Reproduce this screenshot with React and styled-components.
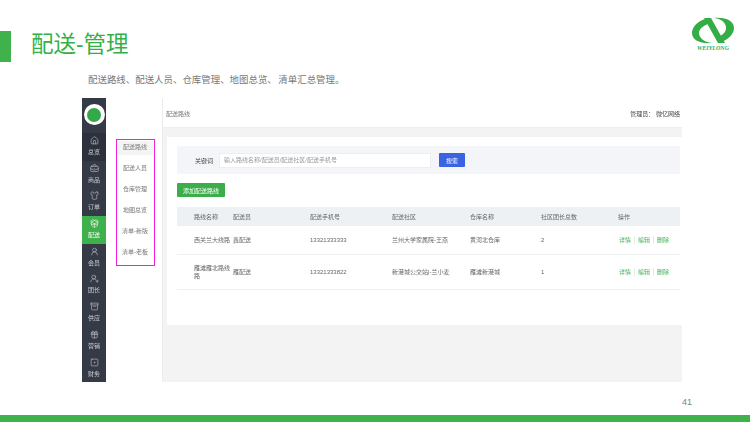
import React from 'react';
import styled, { createGlobalStyle } from 'styled-components';
import { House, BriefcaseBusiness, Shirt, PackageOpen, UserRound, UserRoundPlus, Archive, Gift, SquareDot } from 'lucide-react';

const GlobalStyle = createGlobalStyle`
  html, body {
    margin: 0;
    padding: 0;
    background: #fff;
  }
  body {
    font-family: "Liberation Sans", "Noto Sans CJK SC", sans-serif;
  }
`;

const Slide = styled.div`
  width: 750px;
  height: 422px;
  display: flex;
  flex-direction: column;
  overflow: hidden;
  background: #fff;
`;

const SlideHeader = styled.header`
  height: 62px;
  display: flex;
  justify-content: space-between;
  align-items: flex-start;
  padding-right: 14px;
`;

const TitleWrap = styled.div`
  display: flex;
  align-items: center;
  gap: 20px;
  margin-top: 31px;
`;

const TitleBar = styled.div`
  width: 11px;
  height: 31px;
  background: #3fb24b;
`;

const Title = styled.h1`
  margin: 0 0 4px;
  font-size: 22.5px;
  line-height: 26px;
  font-weight: 400;
  color: #34b049;
`;

const Logo = styled.svg`
  width: 46px;
  height: 35px;
  margin-top: 17px;
`;

const Description = styled.p`
  margin: 11px 0 0 88px;
  height: 25px;
  font-size: 9.45px;
  line-height: 14px;
  color: #777;
  white-space: pre;
  word-spacing: -1px;
`;

const Mock = styled.section`
  margin-left: 82px;
  width: 600px;
  height: 284px;
  display: flex;
  filter: blur(0.25px);
`;

const Sidebar = styled.nav`
  width: 24px;
  background: #343a46;
  display: flex;
  flex-direction: column;
  align-items: center;
`;

const SideLogo = styled.div`
  width: 21px;
  height: 21px;
  margin: 6px 0 8px;
  border-radius: 50%;
  background: #fff;
  display: flex;
  align-items: center;
  justify-content: center;
  flex-shrink: 0;

  &::after {
    content: '';
    width: 14px;
    height: 14px;
    border-radius: 50%;
    background: #33a94a;
  }
`;

const SideItem = styled.div`
  width: 24px;
  height: 27.7px;
  flex-shrink: 0;
  box-sizing: border-box;
  padding-top: 3px;
  display: flex;
  flex-direction: column;
  align-items: center;
  gap: 3px;
  color: ${p => (p.$active ? '#fff' : '#c9ccd1')};
  background: ${p => (p.$active ? '#3eb04c' : p.$home ? '#2c313c' : 'transparent')};
  font-size: 6px;
  line-height: 8px;
`;

const SubNav = styled.div`
  width: 56px;
  padding: 41px 0 0 10px;
  box-sizing: border-box;
  background: #fff;
`;

const SubBox = styled.div`
  width: 39px;
  height: 127px;
  box-sizing: border-box;
  border: 1.5px solid #f01fdc;
  padding: 0.5px;
  display: flex;
  flex-direction: column;
  gap: 7.1px;
`;

const SubItem = styled.div`
  height: 14px;
  margin-right: 1px;
  font-size: 6px;
  line-height: 12px;
  text-align: center;
  color: #777;
  background: ${p => (p.$active ? '#f4f4f4' : 'transparent')};
`;

const Main = styled.div`
  flex: 1;
  display: flex;
  flex-direction: column;
  background: #f3f3f3;
  border-left: 1px solid #ececec;
`;

const TopBar = styled.div`
  height: 30px;
  flex-shrink: 0;
  box-sizing: border-box;
  padding: 2px 2px 0 3px;
  display: flex;
  align-items: center;
  justify-content: space-between;
  background: #fff;
  border-bottom: 1px solid #eeeeee;
  font-size: 6px;
  color: #777;
`;

const Admin = styled.span`
  color: #444;
`;

const Card = styled.div`
  margin: 9px 0 57px 4px;
  flex: 1;
  padding: 9px 2px 0 10px;
  background: #fff;
`;

const SearchBand = styled.div`
  height: 28px;
  display: flex;
  align-items: center;
  background: #f3f5f8;
  padding-left: 18px;
`;

const SearchLabel = styled.label`
  width: 24px;
  font-size: 6px;
  color: #444;
`;

const SearchInput = styled.div`
  width: 212px;
  height: 15px;
  box-sizing: border-box;
  padding-left: 4px;
  background: #fff;
  border: 1px solid #eceef1;
  font-size: 6px;
  line-height: 13px;
  color: #999;
`;

const Button = styled.button`
  border: 0;
  padding: 0;
  font-family: inherit;
  font-size: 6px;
  font-weight: 400;
  color: #fff;
  border-radius: 1px;
`;

const SearchButton = styled(Button)`
  width: 26px;
  height: 14px;
  margin-left: 8px;
  background: #3a63e2;
`;

const AddButton = styled(Button)`
  display: block;
  width: 48px;
  height: 14px;
  margin: 9px 0 10px;
  background: #3bae4b;
`;

const Table = styled.table`
  width: 503px;
  table-layout: fixed;
  border-collapse: collapse;
  font-size: 6px;
  line-height: 8px;
  color: #666;

  th {
    height: 19px;
    padding: 0;
    text-align: left;
    font-weight: 400;
    background: #eef1f4;
    color: #666;
  }

  td {
    padding: 0;
    border-bottom: 1px solid #f1f1f1;
  }

  th:first-child, td:first-child {
    padding-left: 17px;
  }
`;

const Row = styled.tr`
  height: ${p => p.$h}px;
`;

const Actions = styled.div`
  display: flex;
  align-items: center;
  margin-left: 1px;
`;

const ActionLink = styled.span`
  color: #45b257;
  padding: 0 3px;
  border-left: 1px solid #e8e8e8;
  line-height: 8px;

  &:first-child {
    border-left: 0;
    padding-left: 0;
  }
`;

const SlideFooter = styled.footer`
  height: 16px;
  margin: 15px 58px 0 0;
  text-align: right;
  font-size: 9px;
  line-height: 10px;
  color: #808080;
`;

const GreenStrip = styled.div`
  margin-top: 2px;
  height: 7px;
  background: #3fb24b;
`;

const ICON = { size: 9, strokeWidth: 1.5 };

const sideItems = [
  { label: '总览', Icon: House, home: true },
  { label: '商品', Icon: BriefcaseBusiness },
  { label: '订单', Icon: Shirt },
  { label: '配送', Icon: PackageOpen, active: true },
  { label: '会员', Icon: UserRound },
  { label: '团长', Icon: UserRoundPlus },
  { label: '供应', Icon: Archive },
  { label: '营销', Icon: Gift },
  { label: '财务', Icon: SquareDot },
];

const subItems = ['配送路线', '配送人员', '仓库管理', '地图总览', '清单-新版', '清单-老板'];

const rows = [
  { h: 28, name: '西关兰大线路', man: '鑫配送', phone: '13321333333', area: '兰州大学家属院-王燕', store: '黄河北仓库', total: 2 },
  { h: 35, name: '雁滩雁北路线路', man: '雁配送', phone: '13321333822', area: '新港城公交站|-兰小麦', store: '雁滩新港城', total: 1 },
];

export default function App() {
  return (
    <Slide>
      <GlobalStyle />
      <SlideHeader>
        <TitleWrap>
          <TitleBar />
          <Title>配送-管理</Title>
        </TitleWrap>
        <Logo viewBox="0 0 46 35">
          <path d="M15 2 C6 5 2 11 2 16 C2 23 10 27 22 26 C14 25 9 21 9 16 C9 12 13 9 18 7 Z" fill="#35ad46" />
          <path d="M31 25 C40 22 44 16 44 11 C44 4 36 0 24 1 C32 2 36 6 36 11 C36 15 33 18 28 20 Z" fill="#35ad46" />
          <path d="M14 1 L21 1 L35 26 L28 26 Z" fill="#35ad46" />
          <text x="23" y="33" textAnchor="middle" fontSize="6" fontWeight="700" fontStyle="italic" fill="#35ad46" fontFamily="Liberation Serif, serif">WEIYLONG</text>
        </Logo>
      </SlideHeader>
      <Description>配送路线、配送人员、仓库管理、地图总览、 清单汇总管理。</Description>
      <Mock>
        <Sidebar>
          <SideLogo />
          {sideItems.map(({ label, Icon, active, home }) => (
            <SideItem key={label} $active={active} $home={home}>
              <Icon {...ICON} />
              {label}
            </SideItem>
          ))}
        </Sidebar>
        <SubNav>
          <SubBox>
            {subItems.map((item, i) => (
              <SubItem key={item} $active={i === 0}>{item}</SubItem>
            ))}
          </SubBox>
        </SubNav>
        <Main>
          <TopBar>
            <span>配送路线</span>
            <Admin>管理员： 微亿网络</Admin>
          </TopBar>
          <Card>
            <SearchBand>
              <SearchLabel>关键词</SearchLabel>
              <SearchInput>输入路线名称/配送员/配送社区/配送手机号</SearchInput>
              <SearchButton>搜索</SearchButton>
            </SearchBand>
            <AddButton>添加配送路线</AddButton>
            <Table>
              <colgroup>
                <col style={{ width: 56 }} />
                <col style={{ width: 77 }} />
                <col style={{ width: 82 }} />
                <col style={{ width: 78 }} />
                <col style={{ width: 71 }} />
                <col style={{ width: 77 }} />
                <col />
              </colgroup>
              <thead>
                <tr>
                  <th>路线名称</th>
                  <th>配送员</th>
                  <th>配送手机号</th>
                  <th>配送社区</th>
                  <th>仓库名称</th>
                  <th>社区团长总数</th>
                  <th>操作</th>
                </tr>
              </thead>
              <tbody>
                {rows.map(r => (
                  <Row key={r.phone} $h={r.h}>
                    <td>{r.name}</td>
                    <td>{r.man}</td>
                    <td>{r.phone}</td>
                    <td>{r.area}</td>
                    <td>{r.store}</td>
                    <td>{r.total}</td>
                    <td>
                      <Actions>
                        <ActionLink>详情</ActionLink>
                        <ActionLink>编辑</ActionLink>
                        <ActionLink>删除</ActionLink>
                      </Actions>
                    </td>
                  </Row>
                ))}
              </tbody>
            </Table>
          </Card>
        </Main>
      </Mock>
      <SlideFooter>41</SlideFooter>
      <GreenStrip />
    </Slide>
  );
}
